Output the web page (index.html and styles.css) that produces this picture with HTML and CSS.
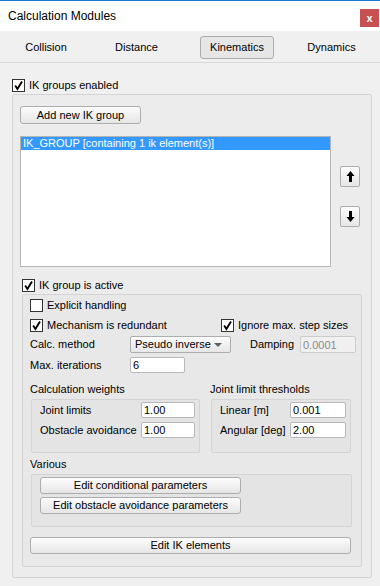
FILE: index.html
```html
<!DOCTYPE html>
<html lang="en">
  <head>
    <meta charset="UTF-8" />
    <meta name="viewport" content="width=device-width, initial-scale=1.0" />
    <title>Calculation Modules</title>
    <link rel="stylesheet" href="styles.css">
  </head>
  <body>
    <div class="window">
      <header class="titlebar">
        <h1>Calculation Modules</h1>
        <button class="close">x</button>
      </header>

      <nav class="tabs">
        <a>Collision</a>
        <a>Distance</a>
        <a class="active">Kinematics</a>
        <a>Dynamics</a>
      </nav>

      <main class="page">
        <label class="check">
          <span class="box"><svg width="11" height="11" viewBox="0 0 11 11"><path d="M2.2 5.6 L4.4 9 L9 1.4" /></svg></span>
          IK groups enabled
        </label>

        <section class="group outer">
          <button class="btn add">Add new IK group</button>

          <div class="list-row">
            <ul class="list">
              <li class="selected">IK_GROUP [containing 1 ik element(s)]</li>
            </ul>
            <div class="movers">
              <button class="btn mover">
                <svg width="9" height="11" viewBox="0 0 9 11"><polygon points="4.5,0 0.5,5 3,5 3,11 6,11 6,5 8.5,5" /></svg>
              </button>
              <button class="btn mover">
                <svg width="9" height="11" viewBox="0 0 9 11"><polygon points="4.5,11 0.5,6 3,6 3,0 6,0 6,6 8.5,6" /></svg>
              </button>
            </div>
          </div>

          <label class="check active-check">
            <span class="box"><svg width="11" height="11" viewBox="0 0 11 11"><path d="M2.2 5.6 L4.4 9 L9 1.4" /></svg></span>
            IK group is active
          </label>

          <section class="group inner">
            <label class="check">
              <span class="box"></span>
              Explicit handling
            </label>

            <div class="row two">
              <label class="check redundant">
                <span class="box"><svg width="11" height="11" viewBox="0 0 11 11"><path d="M2.2 5.6 L4.4 9 L9 1.4" /></svg></span>
                Mechanism is redundant
              </label>
              <label class="check">
                <span class="box"><svg width="11" height="11" viewBox="0 0 11 11"><path d="M2.2 5.6 L4.4 9 L9 1.4" /></svg></span>
                Ignore max. step sizes
              </label>
            </div>

            <div class="row method">
              <span class="lbl">Calc. method</span>
              <div class="combo">Pseudo inverse<span class="arrow"></span></div>
              <span class="lbl damping">Damping</span>
              <input class="field damping-field" value="0.0001" disabled />
            </div>

            <div class="row iter">
              <span class="lbl">Max. iterations</span>
              <input class="field iter-field" value="6" />
            </div>

            <div class="heads">
              <span class="head-weights">Calculation weights</span>
              <span>Joint limit thresholds</span>
            </div>

            <div class="boxes">
              <div class="group sub weights">
                <div class="frow"><span>Joint limits</span><input class="field" value="1.00" /></div>
                <div class="frow"><span>Obstacle avoidance</span><input class="field" value="1.00" /></div>
              </div>
              <div class="group sub limits">
                <div class="frow"><span>Linear [m]</span><input class="field" value="0.001" /></div>
                <div class="frow"><span>Angular [deg]</span><input class="field" value="2.00" /></div>
              </div>
            </div>

            <div class="sublabel">Various</div>
            <div class="group sub various">
              <button class="btn wide">Edit conditional parameters</button>
              <button class="btn wide">Edit obstacle avoidance parameters</button>
            </div>

            <button class="btn full">Edit IK elements</button>
          </section>
        </section>
      </main>
    </div>
  </body>
</html>
```

FILE: styles.css
```css
* {
  margin: 0;
  padding: 0;
  box-sizing: border-box;
}

body {
  font: 11px/13px "Liberation Sans", Arial, sans-serif;
  color: #000;
  background-color: #f0f0f0;
}

.window {
  width: 380px;
  height: 586px;
  border-top: 1px solid #1b7ad4;
  background-color: #f0f0f0;
}

/* title bar */
.titlebar {
  height: 30px;
  display: flex;
  justify-content: space-between;
  align-items: flex-start;
  padding-left: 8px;
  background-color: #fff;
}

.titlebar h1 {
  font-size: 12px;
  font-weight: normal;
  line-height: 30px;
}

.close {
  width: 19px;
  height: 18px;
  margin-top: 8px;
  margin-right: 1px;
  border: none;
  background-color: #c75050;
  color: #fff;
  font: bold 11px/18px "Liberation Sans", Arial, sans-serif;
}

/* tabs */
.tabs {
  height: 32px;
  padding-top: 5px;
  display: grid;
  grid-template-columns: 92px 89px 112px 77px;
  justify-items: center;
  align-items: start;
  border-bottom: 1px solid #dadada;
}

.tabs a {
  width: 74px;
  height: 23px;
  display: flex;
  justify-content: center;
  align-items: center;
  border: 1px solid transparent;
  border-radius: 3px;
}

.tabs a.active {
  border-color: #adadad;
  background-color: #e6e6e6;
}

/* page */
.page {
  padding: 16px 9px 0 12px;
}

.check {
  display: flex;
  align-items: center;
  gap: 4px;
  height: 13px;
}

.box {
  width: 13px;
  height: 13px;
  flex: none;
  display: flex;
  align-items: center;
  justify-content: center;
  border: 1px solid #333;
  background-color: #fff;
}

.box path {
  fill: none;
  stroke: #000;
  stroke-width: 1.9;
}

.group {
  border: 1px solid #d4d4d4;
  border-radius: 2px;
}

.outer {
  width: 360px;
  margin-top: 2px;
  padding: 11px 9px 10px 7px;
  background-color: #ececec;
}

.btn {
  border: 1px solid #adadad;
  border-radius: 3px;
  background: linear-gradient(#fcfcfc, #e6e6e6);
  font: 11px/13px "Liberation Sans", Arial, sans-serif;
  color: #000;
}

.add {
  width: 121px;
  height: 18px;
  display: block;
}

.list-row {
  display: flex;
  margin-top: 12px;
}

.list {
  width: 311px;
  height: 131px;
  list-style: none;
  border: 1px solid #b4b4b4;
  background-color: #fff;
}

.list li {
  height: 13px;
  padding-left: 2px;
}

.list li.selected {
  background-color: #3399ff;
  color: #fff;
}

.movers {
  display: flex;
  flex-direction: column;
  gap: 19px;
  margin-left: 9px;
  padding-top: 30px;
}

.mover {
  width: 20px;
  height: 21px;
  display: flex;
  align-items: center;
  justify-content: center;
  border-radius: 2px;
}

.mover polygon {
  fill: #000;
}

.active-check {
  margin: 12px 0 0 2px;
}

.inner {
  width: 340px;
  margin: 2px 0 0 2px;
  padding: 4px 0 12px 7px;
  background-color: #e8e8e8;
}

.row {
  display: flex;
  align-items: center;
}

.two {
  margin-top: 7px;
}

.redundant {
  width: 191px;
}

.method {
  margin-top: 4px;
  height: 17px;
}

.lbl {
  width: 100px;
}

.combo {
  width: 101px;
  height: 17px;
  display: flex;
  justify-content: space-between;
  align-items: center;
  padding: 0 8px 0 4px;
  border: 1px solid #adadad;
  border-radius: 2px;
  background: linear-gradient(#fcfcfc, #e6e6e6);
}

.arrow {
  width: 0;
  height: 0;
  border-left: 4px solid transparent;
  border-right: 4px solid transparent;
  border-top: 4px solid #606060;
}

.lbl.damping {
  width: 50px;
  margin-left: 19px;
}

.field {
  width: 54px;
  height: 16px;
  padding-left: 2px;
  border: 1px solid #b8b8b8;
  border-radius: 2px;
  background-color: #fff;
  font: 11px/13px "Liberation Sans", Arial, sans-serif;
  color: #000;
  outline: none;
}

.damping-field {
  width: 56px;
  height: 17px;
  background-color: #f0f0f0;
  border-color: #cccccc;
  color: #8a8a8a;
}

.iter {
  margin-top: 4px;
  height: 16px;
}

.iter-field {
  width: 55px;
}

.heads {
  display: flex;
  margin-top: 10px;
}

.head-weights {
  width: 180px;
}

.boxes {
  display: flex;
  margin-top: 3px;
  margin-left: 1px;
}

.sub {
  height: 54px;
  padding: 2px 0 0 8px;
  background-color: #e4e4e4;
}

.weights {
  width: 169px;
}

.limits {
  width: 140px;
  margin-left: 11px;
}

.frow {
  display: flex;
  align-items: center;
  height: 16px;
  margin-bottom: 4px;
}

.weights .frow span {
  width: 101px;
}

.limits .frow span {
  width: 70px;
}

.limits .field {
  width: 56px;
}

.sublabel {
  margin-top: 5px;
}

.various {
  width: 321px;
  height: 53px;
  margin: 3px 0 0 1px;
  display: flex;
  flex-direction: column;
  gap: 3px;
}

.wide {
  width: 201px;
  height: 17px;
}

.full {
  display: block;
  width: 321px;
  height: 17px;
  margin-top: 10px;
}
```
